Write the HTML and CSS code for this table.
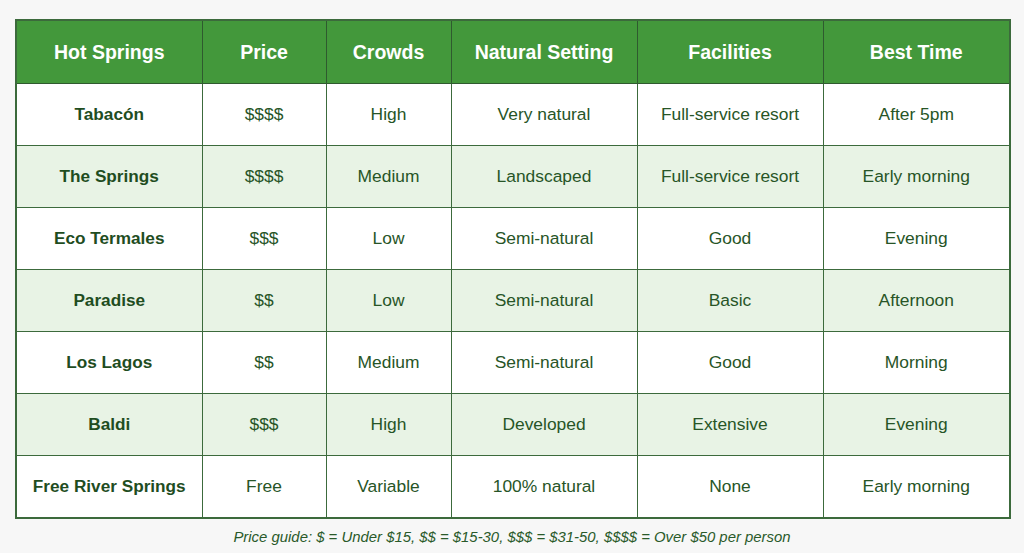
FILE: index.html
```html
<!DOCTYPE html>
<html>
<head>
<meta charset="utf-8">
<link rel="stylesheet" href="styles.css">
</head>
<body>
<div class="page">
  <table class="springs">
    <colgroup>
      <col class="c1"><col class="c2"><col class="c3"><col class="c4"><col class="c5"><col class="c6">
    </colgroup>
    <thead>
      <tr><th>Hot Springs</th><th>Price</th><th>Crowds</th><th>Natural Setting</th><th>Facilities</th><th>Best Time</th></tr>
    </thead>
    <tbody>
      <tr><td class="name">Tabacón</td><td>$$$$</td><td>High</td><td>Very natural</td><td>Full-service resort</td><td>After 5pm</td></tr>
      <tr class="alt"><td class="name">The Springs</td><td>$$$$</td><td>Medium</td><td>Landscaped</td><td>Full-service resort</td><td>Early morning</td></tr>
      <tr><td class="name">Eco Termales</td><td>$$$</td><td>Low</td><td>Semi-natural</td><td>Good</td><td>Evening</td></tr>
      <tr class="alt"><td class="name">Paradise</td><td>$$</td><td>Low</td><td>Semi-natural</td><td>Basic</td><td>Afternoon</td></tr>
      <tr><td class="name">Los Lagos</td><td>$$</td><td>Medium</td><td>Semi-natural</td><td>Good</td><td>Morning</td></tr>
      <tr class="alt"><td class="name">Baldi</td><td>$$$</td><td>High</td><td>Developed</td><td>Extensive</td><td>Evening</td></tr>
      <tr><td class="name">Free River Springs</td><td>Free</td><td>Variable</td><td>100% natural</td><td>None</td><td>Early morning</td></tr>
    </tbody>
  </table>
  <p class="guide">Price guide: $ = Under $15, $$ = $15-30, $$$ = $31-50, $$$$ = Over $50 per person</p>
</div>
</body>
</html>
```
FILE: styles.css
```css
html, body {
  margin: 0;
  padding: 0;
  background: #f7f7f7;
}
.page {
  padding: 19px 15px 0 15px;
  font-family: "Liberation Sans", Arial, sans-serif;
}
.springs {
  width: 994px;
  border-collapse: collapse;
  table-layout: fixed;
  border: 2px solid #3c6a3c;
}
.c1 { width: 186px; }
.c2 { width: 124px; }
.c3 { width: 125px; }
.c4 { width: 186px; }
.c5 { width: 186px; }
.c6 { width: 187px; }
.springs th {
  background: #43983b;
  color: #ffffff;
  font-size: 19.5px;
  font-weight: bold;
  height: 62px;
  padding: 0;
  border: 1px solid #2f5a2f;
  text-align: center;
}
.springs td {
  background: #ffffff;
  color: #275527;
  font-size: 17.4px;
  height: 61px;
  padding: 0;
  border: 1px solid #3c6a3c;
  text-align: center;
}
.springs tr.alt td {
  background: #e8f3e5;
}
.springs td.name {
  font-weight: bold;
  font-size: 17.2px;
  color: #1f4d1f;
}
.guide {
  margin: 10px 0 0 0;
  text-align: center;
  font-style: italic;
  font-size: 14.9px;
  color: #2a5a2a;
}
```
